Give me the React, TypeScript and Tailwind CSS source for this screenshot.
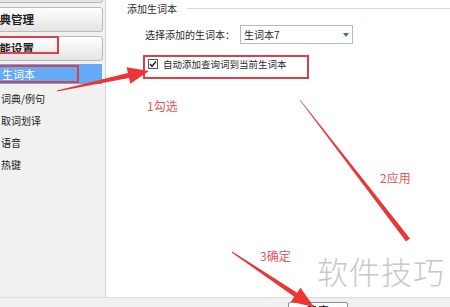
import type { ReactNode } from 'react';

// tapered arrow: thin tail, wider shaft near the head, triangular head at (x1, y1)
function arrowPoints(
  x0: number,
  y0: number,
  x1: number,
  y1: number,
  w0: number,
  w1: number,
  headLen: number,
  headW: number,
) {
  const dx = x1 - x0;
  const dy = y1 - y0;
  const len = Math.hypot(dx, dy);
  const ux = dx / len;
  const uy = dy / len;
  const nx = -uy;
  const ny = ux;
  const bx = x1 - ux * headLen;
  const by = y1 - uy * headLen;
  const pts: [number, number][] = [
    [x0 + (nx * w0) / 2, y0 + (ny * w0) / 2],
    [bx + (nx * w1) / 2, by + (ny * w1) / 2],
    [bx + (nx * headW) / 2, by + (ny * headW) / 2],
    [x1, y1],
    [bx - (nx * headW) / 2, by - (ny * headW) / 2],
    [bx - (nx * w1) / 2, by - (ny * w1) / 2],
    [x0 - (nx * w0) / 2, y0 - (ny * w0) / 2],
  ];
  return pts.map((p) => p.map((v) => v.toFixed(1)).join(',')).join(' ');
}

function taperPoints(x0: number, y0: number, x1: number, y1: number, w0: number, w1: number) {
  const dx = x1 - x0;
  const dy = y1 - y0;
  const len = Math.hypot(dx, dy);
  const nx = -dy / len;
  const ny = dx / len;
  const pts: [number, number][] = [
    [x0 + (nx * w0) / 2, y0 + (ny * w0) / 2],
    [x1 + (nx * w1) / 2, y1 + (ny * w1) / 2],
    [x1 - (nx * w1) / 2, y1 - (ny * w1) / 2],
    [x0 - (nx * w0) / 2, y0 - (ny * w0) / 2],
  ];
  return pts.map((p) => p.map((v) => v.toFixed(1)).join(',')).join(' ');
}

function SideButton({ children }: { children?: ReactNode }) {
  return (
    <div className="ml-[-30px] mr-[2px] h-[25px] flex items-center pl-[17px] rounded-[3px] border border-[#b9b9b9] bg-gradient-to-b from-white to-[#e4e4e4] text-[11.5px] font-bold text-[#1e1e1e] whitespace-nowrap">
      {children}
    </div>
  );
}

function NavItem({ label }: { label: string }) {
  return <div className="h-[22px] flex items-center pl-[1px] text-[10px] text-[#222]">{label}</div>;
}

export default function App() {
  return (
    <div className="relative w-[450px] h-[307px] overflow-hidden bg-white font-['Noto_Sans_CJK_SC','Noto_Sans',sans-serif]">
      <div className="flex flex-col h-full">
        <div className="flex flex-1 min-h-0">
          {/* left nav */}
          <div className="w-[106px] shrink-0 bg-[#f1f1f1] border-r border-[#d6d6d6] flex flex-col">
            <div className="mt-[-22px]">
              <SideButton />
            </div>
            <div className="mt-[4px]">
              <SideButton>词典管理</SideButton>
            </div>
            <div className="mt-[4px]">
              <SideButton>功能设置</SideButton>
            </div>
            <div className="mt-[3px] mr-[3px] h-[20px] flex items-center pl-[2px] bg-[#65aaf6] text-white text-[11px]">
              生词本
            </div>
            <div className="mt-[3px]">
              <NavItem label="词典/例句" />
              <NavItem label="取词划译" />
              <NavItem label="语音" />
              <NavItem label="热键" />
            </div>
          </div>

          {/* settings panel */}
          <div className="flex-1 bg-white pl-[21px] pt-[1px] text-[10px] text-[#2a2a2a]">
            <div className="flex items-center h-[14px]">
              <span>添加生词本</span>
              <div className="flex-1 h-px bg-[#cfdbe7] ml-[10px]" />
            </div>
            <div className="flex items-center mt-[10px] pl-[18px]">
              <span className="w-[95px]">选择添加的生词本：</span>
              <div className="w-[113px] h-[19px] border border-[#a9bdd4] bg-white flex items-center pl-[3px]">
                <span className="flex-1">生词本7</span>
                <div className="w-[12px] h-full flex items-center justify-center">
                  <div className="w-0 h-0 border-l-[3px] border-r-[3px] border-t-[4px] border-l-transparent border-r-transparent border-t-[#3b6fa8]" />
                </div>
              </div>
            </div>
            <div className="flex items-center mt-[13px] pl-[21px]">
              <svg width="10" height="10" viewBox="0 0 10 10" className="shrink-0">
                <rect x="0.5" y="0.5" width="9" height="9" fill="white" stroke="#555" />
                <path d="M2 5 L4 7.3 L8 2.5" fill="none" stroke="#222" strokeWidth="1.4" />
              </svg>
              <span className="ml-[5px] text-[9.5px]">自动添加查询词到当前生词本</span>
            </div>
          </div>
        </div>

        {/* bottom button bar */}
        <div className="h-[10px] shrink-0 bg-[#f0f0f0] border-t border-[#dcdcdc] relative">
          <div className="absolute left-[288px] top-[4px] w-[60px] h-[22px] rounded-[2px] border border-[#8c8c8c] bg-gradient-to-b from-white to-[#e8e8e8] flex justify-center pt-[1px] text-[11px] leading-[12px] text-[#111]">
            确定
          </div>
        </div>
      </div>

      {/* annotation boxes */}
      <div className="absolute left-[-4px] top-[36px] w-[63px] h-[18px] border-2 border-[#dc4048] pointer-events-none" />
      <div className="absolute left-[-4px] top-[65px] w-[83px] h-[18px] border-2 border-[#dc4048] pointer-events-none" />
      <div className="absolute left-[143px] top-[55px] w-[166px] h-[24px] border-2 border-[#dc4048] pointer-events-none" />

      {/* annotation arrows */}
      <svg className="absolute inset-0 pointer-events-none" width="450" height="307" viewBox="0 0 450 307">
        <polygon points={arrowPoints(57, 91, 149, 71, 1, 5, 21, 17)} fill="#ee3434" />
        <polygon points={taperPoints(300, 100, 408, 240, 0.6, 5)} fill="#ee3434" />
        <polygon points={arrowPoints(232, 252, 314, 307, 1, 5, 22, 17)} fill="#ee3434" />
      </svg>

      {/* annotation labels */}
      <div className="absolute left-[147px] top-[97px] text-[12px] text-[#e2585a] pointer-events-none">1勾选</div>
      <div className="absolute left-[380px] top-[169px] text-[12px] text-[#e2585a] pointer-events-none">2应用</div>
      <div className="absolute left-[260px] top-[247px] text-[12px] text-[#e2585a] pointer-events-none">3确定</div>

      {/* watermark */}
      <div className="absolute left-[317px] top-[252px] text-[31px] leading-[38px] font-light text-[#c8c8c8] tracking-[1px] pointer-events-none">
        软件技巧
      </div>
    </div>
  );
}
